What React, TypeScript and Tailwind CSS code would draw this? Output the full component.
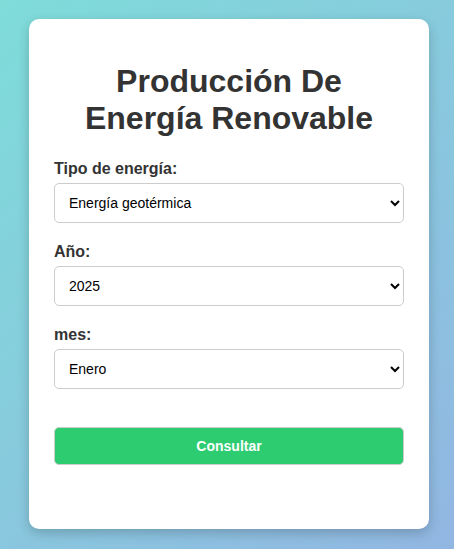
import { useState } from "react";

const tipos = [
  "Energía solar",
  "Energía eólica",
  "Energía hidroeléctrica",
  "Energía geotérmica",
  "Biomasa",
];

const anios = ["2022", "2023", "2024", "2025"];

const meses = [
  "Enero",
  "Febrero",
  "Marzo",
  "Abril",
  "Mayo",
  "Junio",
  "Julio",
  "Agosto",
  "Septiembre",
  "Octubre",
  "Noviembre",
  "Diciembre",
];

const Campo = ({
  label,
  value,
  options,
  onChange,
}: {
  label: string;
  value: string;
  options: string[];
  onChange: (v: string) => void;
}) => (
  <div className="mb-[20px]">
    <label className="block mb-[5px] text-[16px] leading-[18px] font-bold text-[#333]">
      {label}
    </label>
    <select
      value={value}
      onChange={(e) => onChange(e.target.value)}
      className="block w-full h-[40px] px-[10px] text-[14px] text-black bg-white border border-[#ccc] rounded-[5px]"
    >
      {options.map((o) => (
        <option key={o} value={o}>
          {o}
        </option>
      ))}
    </select>
  </div>
);

const App = () => {
  const [tipo, setTipo] = useState("Energía geotérmica");
  const [anio, setAnio] = useState("2025");
  const [mes, setMes] = useState("Enero");

  return (
    <div
      className="min-h-screen pt-[19px] bg-[linear-gradient(135deg,#7edcd9,#92b6e2)]"
      style={{ fontFamily: '"Liberation Sans", Arial, sans-serif' }}
    >
      <div className="ml-[29px] w-[400px] bg-white rounded-[10px] shadow-[0_4px_12px_rgba(0,0,0,0.2)] px-[25px] pt-[25px] pb-[64px]">
        <h1 className="mt-[19px] mb-[23px] text-center text-[32px] leading-[37px] font-bold text-[#333]">
          Producción De Energía Renovable
        </h1>
        <form onSubmit={(e) => e.preventDefault()}>
          <Campo label="Tipo de energía:" value={tipo} options={tipos} onChange={setTipo} />
          <Campo label="Año:" value={anio} options={anios} onChange={setAnio} />
          <Campo label="mes:" value={mes} options={meses} onChange={setMes} />
          <button
            type="submit"
            className="block w-full mt-[38px] h-[38px] bg-[#2ecc71] border border-[#ccc] rounded-[5px] text-white text-[14px] font-bold"
          >
            Consultar
          </button>
        </form>
      </div>
    </div>
  );
};

export default App;
